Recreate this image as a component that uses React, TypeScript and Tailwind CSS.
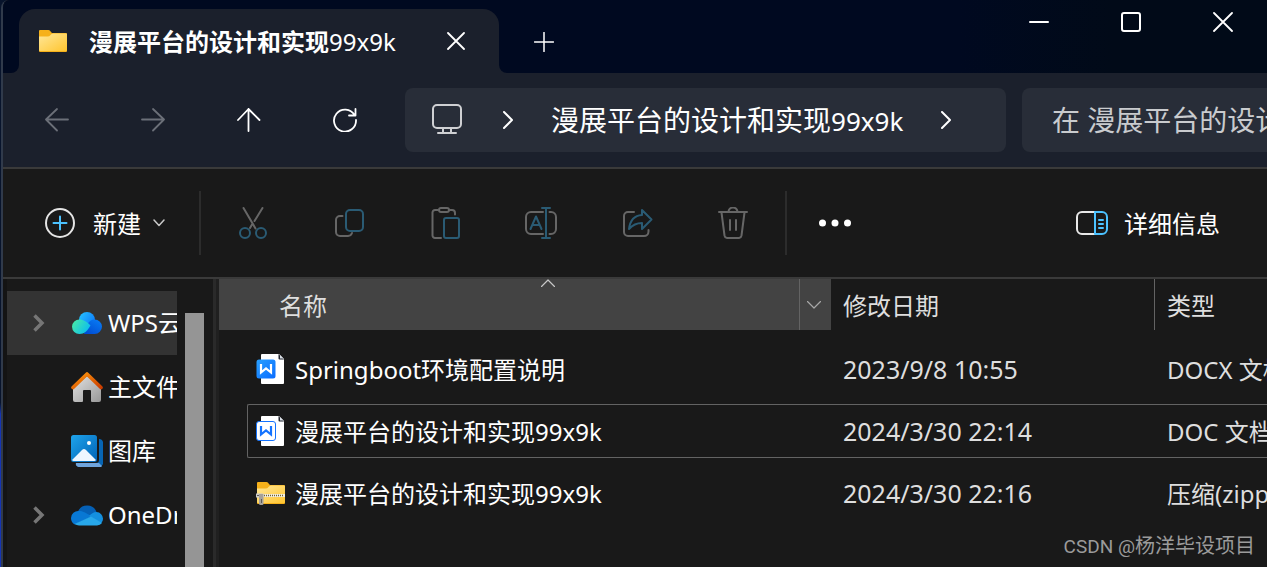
import type { ReactNode } from 'react'

type StrokeIconProps = {
  className?: string
  box: string
  width?: number
  children: ReactNode
}

function StrokeIcon({ className, box, width = 1.5, children }: StrokeIconProps) {
  return (
    <svg
      aria-hidden="true"
      className={className}
      viewBox={box}
      fill="none"
      stroke="currentColor"
      strokeWidth={width}
      strokeLinecap="round"
      strokeLinejoin="round"
    >
      {children}
    </svg>
  )
}

const TEAL = '#2a5b74'
const GREY = '#666666'

function FolderIcon({ zipped = false }: { zipped?: boolean }) {
  return (
    <svg aria-hidden="true" className="h-6 w-[30px] shrink-0" viewBox="0 0 30 24">
      <defs>
        <linearGradient id="folder-face" x1="0" y1="0" x2="1" y2="1">
          <stop offset="0" stopColor="#ffe799" />
          <stop offset="1" stopColor="#ffc52f" />
        </linearGradient>
      </defs>
      <path d="M1 2a1 1 0 0 1 1-1h8.500q1.500 0 2.500 2l1 1H28a1 1 0 0 1 1 1v17a1 1 0 0 1-1 1H2a1 1 0 0 1-1-1z" fill="#f6b11a" />
      <path d="M1 7.500h8.500q2 0 3-1.500t2.500-1.500h13a1 1 0 0 1 1 1V21a1 1 0 0 1-1 1H2a1 1 0 0 1-1-1z" fill="url(#folder-face)" />
      {zipped && (
        <>
          <path d="M6 14.500h23" stroke="#f3eee0" strokeWidth="3" />
          <path d="M8 14.500h20" stroke="#71622f" strokeWidth="1.500" strokeDasharray="1 1" />
          <path d="M0 12.500h7v4H0z" fill="#c9c9c9" />
          <path d="M3 13h4.500v9.500A1.500 1.500 0 0 1 6 24H4.500A1.500 1.500 0 0 1 3 22.500z" fill="#a6a19a" />
          <path d="M5.500 18v4M1 14.500h2" stroke="#5d5a55" strokeWidth="1" />
        </>
      )}
    </svg>
  )
}

function WriterIcon({ filled = false }: { filled?: boolean }) {
  return (
    <svg aria-hidden="true" className="h-8 w-[30px] shrink-0" viewBox="0 0 30 32">
      <defs>
        <linearGradient id="writer-badge" x1="0" y1="0" x2="1" y2="1">
          <stop offset="0" stopColor="#28a0ff" />
          <stop offset="1" stopColor="#0a6cff" />
        </linearGradient>
      </defs>
      <path d="M6 1h17l5 5v24a1 1 0 0 1-1 1H6a1 1 0 0 1-1-1V2a1 1 0 0 1 1-1z" fill="#ffffff" />
      <path d="M22.500 1v4.500a1 1 0 0 0 1 1H28z" fill="#20242f" />
      <path d="M24 2v3.500h3.500z" fill="#dce2ea" />
      <rect
        x="0.500"
        y="6.500"
        width="19"
        height="19"
        rx="2.500"
        fill={filled ? 'url(#writer-badge)' : '#ffffff'}
        stroke={filled ? 'none' : '#1473ff'}
      />
      <path
        d="M5 11v8.500l5-4 5 4V11"
        fill="none"
        stroke={filled ? '#ffffff' : '#1473ff'}
        strokeWidth="2.200"
      />
    </svg>
  )
}

function WpsCloudIcon() {
  return (
    <svg aria-hidden="true" className="h-8 w-8 shrink-0" viewBox="0 0 32 32">
      <defs>
        <linearGradient id="wps-top" x1="0" y1="0" x2="1" y2="0.600">
          <stop offset="0" stopColor="#28c5ff" />
          <stop offset="1" stopColor="#0d7dfb" />
        </linearGradient>
        <linearGradient id="wps-right" x1="0" y1="1" x2="0.700" y2="0">
          <stop offset="0" stopColor="#0048cf" />
          <stop offset="1" stopColor="#0878f2" />
        </linearGradient>
        <linearGradient id="wps-left" x1="0" y1="0.200" x2="1" y2="0.700">
          <stop offset="0" stopColor="#47eba6" />
          <stop offset="1" stopColor="#08baf4" />
        </linearGradient>
      </defs>
      <circle cx="16" cy="13" r="8" fill="url(#wps-top)" />
      <path d="M15 20c2-5 5-7.500 8.500-7.500A7.400 7.400 0 0 1 31 19.500a7.400 7.400 0 0 1-7.500 7.500H13z" fill="url(#wps-right)" />
      <path d="M8.500 12.500c3.500 0 8 2.500 11 6-3 5-6 8.500-11 8.500A7.400 7.400 0 0 1 1 19.700a7.400 7.400 0 0 1 7.500-7.200z" fill="url(#wps-left)" />
    </svg>
  )
}

function HomeIcon() {
  return (
    <svg aria-hidden="true" className="h-8 w-8 shrink-0" viewBox="0 0 32 32">
      <defs>
        <linearGradient id="home-wall" x1="0" y1="0" x2="1" y2="1">
          <stop offset="0" stopColor="#e3e3e3" />
          <stop offset="1" stopColor="#989898" />
        </linearGradient>
        <linearGradient id="home-roof" x1="0" y1="0" x2="1" y2="1">
          <stop offset="0" stopColor="#ff9a0d" />
          <stop offset="1" stopColor="#cc3d00" />
        </linearGradient>
      </defs>
      <path d="M16 5 2 17v12a2 2 0 0 0 2 2h7a1 1 0 0 0 1-1V20a1 1 0 0 1 1-1h6a1 1 0 0 1 1 1v10a1 1 0 0 0 1 1h7a2 2 0 0 0 2-2V17z" fill="url(#home-wall)" />
      <path d="m2 16.500 14-13.500 14 13.500" fill="none" stroke="url(#home-roof)" strokeWidth="3.600" strokeLinecap="round" strokeLinejoin="round" />
    </svg>
  )
}

function GalleryIcon() {
  return (
    <svg aria-hidden="true" className="h-8 w-8 shrink-0" viewBox="0 0 32 32">
      <defs>
        <linearGradient id="gallery-sky" x1="0" y1="0" x2="1" y2="1">
          <stop offset="0" stopColor="#1fa4ec" />
          <stop offset="1" stopColor="#0062b5" />
        </linearGradient>
      </defs>
      <path d="M28 4a4 4 0 0 1 4 3v22l-2 3H8a4 4 0 0 1-3-4h20a3 3 0 0 0 3-3z" fill="#0765b4" />
      <path d="M5 28h23l3 3-1 1H8a3 3 0 0 1-3-4z" fill="#6fa4dc" />
      <rect width="26" height="27" rx="2.500" fill="url(#gallery-sky)" />
      <path d="m1 25 10-10a3 3 0 0 1 4 0l10 10a2 2 0 0 1-2 1H3a2 2 0 0 1-2-1z" fill="#eef6ff" />
      <circle cx="18" cy="8" r="2" fill="#ffffff" />
    </svg>
  )
}

function OneDriveIcon() {
  return (
    <svg aria-hidden="true" className="h-8 w-8 shrink-0" viewBox="0 0 32 32">
      <path d="M7 12.500A10 10 0 0 1 25.500 13L20 19z" fill="#0560b5" />
      <path d="M8 12c4 0 6 1.500 13 5.500L4 25.500A7.200 7.200 0 0 1 0 19a7.200 7.200 0 0 1 8-7z" fill="#0878d4" />
      <path d="M25.500 13a6.800 6.800 0 0 1 6.500 7 6 6 0 0 1-2 4.500L18 17c2-2 4.500-4 7.500-4z" fill="#1490df" />
      <path d="M3.500 25 20 17.500l11 6.500a6.500 6.500 0 0 1-5 2.500H8A8 8 0 0 1 3.500 25z" fill="#28a8ea" />
    </svg>
  )
}

const commands: { label: string; icon: ReactNode }[] = [
  {
    label: '剪切',
    icon: (
      <>
        <path d="m6.500 1 12 20.500M25.500 1 17.500 14M15 17.500 13 21" stroke={GREY} />
        <circle cx="8" cy="26" r="5" stroke={TEAL} />
        <circle cx="24" cy="26" r="5" stroke={TEAL} />
      </>
    ),
  },
  {
    label: '复制',
    icon: (
      <>
        <path d="M9.500 9H7a4 4 0 0 0-4 4v12a4 4 0 0 0 4 4h8a4.500 4.500 0 0 0 4-3" stroke={GREY} />
        <rect x="13" y="3" width="17" height="21" rx="4" stroke={TEAL} />
      </>
    ),
  },
  {
    label: '粘贴',
    icon: (
      <>
        <path d="M9 3H6a2.500 2.500 0 0 0-2.500 2.500v23A2.500 2.500 0 0 0 6 31h6M20 3h3a3 3 0 0 1 3 3v1.500" stroke={GREY} />
        <rect x="10" y="1" width="10" height="4" rx="2" stroke={GREY} />
        <rect x="15" y="11" width="15" height="20" rx="2" stroke={TEAL} />
      </>
    ),
  },
  {
    label: '重命名',
    icon: (
      <>
        <path d="M18 5H6a5 5 0 0 0-5 5v12a5 5 0 0 0 5 5h12M24.500 5H26a5 5 0 0 1 5 5v12a5 5 0 0 1-5 5h-1.500" stroke={GREY} />
        <path d="M21 1v30M17 1h8M17 31h8M5.500 22 11 9.500 16.500 22M7.500 18h7" stroke={TEAL} strokeWidth="2" />
      </>
    ),
  },
  {
    label: '共享',
    icon: (
      <>
        <path d="M13 5H7a4 4 0 0 0-4 4v16a4 4 0 0 0 4 4h16a4.500 4.500 0 0 0 4.500-4.500V23" stroke={GREY} />
        <path d="m21 3 9.500 9.500L21 22v-6c-5.500 0-9 1.500-13 6 1-8 5-13.500 13-14z" stroke={TEAL} strokeWidth="2" />
      </>
    ),
  },
  {
    label: '删除',
    icon: (
      <path
        d="M2 5h28M11.500 5a4.500 4.500 0 0 1 9 0M4.500 5.500l3 23A3 3 0 0 0 10 31h12a3 3 0 0 0 2.500-2.500l3-23M13 13v10M19 13v10"
        stroke={GREY}
      />
    ),
  },
]

const places = [
  { name: 'WPS云盘', icon: <WpsCloudIcon />, expandable: true, selected: true },
  { name: '主文件夹', icon: <HomeIcon />, expandable: false, selected: false },
  { name: '图库', icon: <GalleryIcon />, expandable: false, selected: false },
  { name: 'OneDrive', icon: <OneDriveIcon />, expandable: true, selected: false },
]

const files = [
  { name: 'Springboot环境配置说明', date: '2023/9/8 10:55', type: 'DOCX 文档', icon: <WriterIcon filled />, focused: false },
  { name: '漫展平台的设计和实现99x9k', date: '2024/3/30 22:14', type: 'DOC 文档', icon: <WriterIcon />, focused: true },
  { name: '漫展平台的设计和实现99x9k', date: '2024/3/30 22:16', type: '压缩(zipped)文件夹', icon: <FolderIcon zipped />, focused: false },
]

function TitleBar() {
  return (
    <header className="flex h-[73px] bg-[#1b202c]">
      <div className="w-4 rounded-br-lg bg-[#000920]" />
      <div className="bg-[#000920] pt-[9px]">
        <div className="flex h-16 w-[480px] items-center rounded-t-2xl bg-[#1b202c] pl-[19px] pr-8">
          <FolderIcon />
          <h1 className="ml-[21px] flex-1 whitespace-nowrap pt-0.5 text-2xl font-bold">
            漫展平台的设计和实现<span className="font-normal">99x9k</span>
          </h1>
          <button type="button" aria-label="关闭标签页" className="flex h-6 w-[22px] items-center justify-center">
            <StrokeIcon box="0 0 18 18" width={1.8} className="h-[18px] w-[18px]">
              <path d="m1 1 16 16M17 1 1 17" />
            </StrokeIcon>
          </button>
        </div>
      </div>
      <div className="flex flex-1 justify-between rounded-bl-lg bg-linear-to-r from-[#000920] from-60% to-[#010a18] to-80%">
        <button type="button" aria-label="新建标签页" className="mt-2.5 flex h-16 w-[90px] items-center justify-center">
          <StrokeIcon box="0 0 20 20" className="h-5 w-5">
            <path d="M10 .500v19M.500 10h19" />
          </StrokeIcon>
        </button>
        <div className="-mr-0.5 flex h-11">
          <button type="button" aria-label="最小化" className="flex w-[92px] items-center justify-center">
            <StrokeIcon box="0 0 20 20" width={2} className="h-5 w-5">
              <path d="M1 10h18" />
            </StrokeIcon>
          </button>
          <button type="button" aria-label="最大化" className="flex w-[92px] items-center justify-center">
            <StrokeIcon box="0 0 20 20" width={2} className="h-5 w-5">
              <rect x="1" y="1" width="18" height="18" rx="2" />
            </StrokeIcon>
          </button>
          <button type="button" aria-label="关闭" className="flex w-[92px] items-center justify-center">
            <StrokeIcon box="0 0 20 20" width={1.8} className="h-5 w-5">
              <path d="m1 1 18 18M19 1 1 19" />
            </StrokeIcon>
          </button>
        </div>
      </div>
    </header>
  )
}

function NavigationBar() {
  return (
    <nav className="flex h-24 items-center overflow-hidden border-b-2 border-[#3a3a3a] bg-[#1b202c] pl-1.5">
      <button type="button" aria-label="后退" disabled className="flex h-16 w-24 shrink-0 items-center justify-center text-[#6b6f78]">
        <StrokeIcon box="0 0 24 24" width={1.8} className="h-6 w-6">
          <path d="M23 11.500H1M12 1 1 11.500l11 11" />
        </StrokeIcon>
      </button>
      <button type="button" aria-label="前进" disabled className="flex h-16 w-24 shrink-0 items-center justify-center text-[#6b6f78]">
        <StrokeIcon box="0 0 24 24" width={1.8} className="h-6 w-6">
          <path d="M1 11.500h22M12 1l11 10.500-11 11" />
        </StrokeIcon>
      </button>
      <button type="button" aria-label="向上" className="flex h-16 w-24 shrink-0 items-center justify-center">
        <StrokeIcon box="0 0 24 24" width={1.8} className="h-6 w-6">
          <path d="M11.500 23V1M1 12 11.500 1l11 11" />
        </StrokeIcon>
      </button>
      <button type="button" aria-label="刷新" className="flex h-16 w-24 shrink-0 items-center justify-center">
        <StrokeIcon box="0 0 24 24" width={1.8} className="h-6 w-6">
          <path d="M21.500 7A11 11 0 1 0 23 12M22.500 1v6.500H16" />
        </StrokeIcon>
      </button>
      <div className="ml-3 flex h-16 flex-1 items-center overflow-hidden rounded-lg bg-[#282d38] pl-[26px]">
        <StrokeIcon box="0 0 32 32" width={2} className="h-8 w-8 shrink-0 text-[#cfd0d3]">
          <rect x="2" y="1" width="28" height="23" rx="4" />
          <path d="M12 24.500v4M20 24.500v4M7 29h18" />
        </StrokeIcon>
        <StrokeIcon box="0 0 10 18" width={2} className="ml-10 h-[18px] w-2.5 shrink-0">
          <path d="m1 1 8 8-8 8" />
        </StrokeIcon>
        <a href="#folder" className="ml-[38px] whitespace-nowrap text-[28px] leading-9">
          漫展平台的设计和实现<span className="text-[26px]">99x9k</span>
        </a>
        <StrokeIcon box="0 0 10 18" width={2} className="ml-[38px] h-[18px] w-2.5 shrink-0">
          <path d="m1 1 8 8-8 8" />
        </StrokeIcon>
      </div>
      <div className="ml-4 w-[245px] shrink-0 overflow-hidden rounded-l-lg bg-[#282d38]">
        <input
          type="text"
          aria-label="搜索"
          placeholder="在 漫展平台的设计和实现99x9k 中搜索"
          className="h-16 w-[560px] bg-transparent pl-[30px] text-[28px] leading-9 outline-none placeholder:text-[#c9cbce] placeholder:opacity-100"
        />
      </div>
    </nav>
  )
}

function CommandBar() {
  return (
    <div role="toolbar" aria-label="命令" className="flex h-[110px] items-center border-b-2 border-[#3a3a3a] bg-[#191919]">
      <button type="button" className="ml-[42px] flex h-16 items-center text-2xl">
        <StrokeIcon box="0 0 30 30" width={2} className="h-[30px] w-[30px] text-[#e4e4e4]">
          <circle cx="15" cy="15" r="14" />
          <path d="M15 8.500v13M8.500 15h13" stroke="#4cc2ff" />
        </StrokeIcon>
        <span className="ml-[18px] pt-0.5">新建</span>
        <StrokeIcon box="0 0 12 8" className="ml-3 h-2 w-3 text-[#c8c8c8]">
          <path d="m1 1 5 5.500L11 1" />
        </StrokeIcon>
      </button>
      <div className="ml-[34px] h-16 w-0.5 bg-[#2c2c2c]" />
      <div className="ml-1 flex">
        {commands.map((command) => (
          <button
            key={command.label}
            type="button"
            disabled
            aria-label={command.label}
            className="flex h-16 w-24 items-center justify-center"
          >
            <StrokeIcon box="0 0 32 32" width={2} className="h-8 w-8">
              {command.icon}
            </StrokeIcon>
          </button>
        ))}
      </div>
      <div className="ml-1 h-16 w-0.5 bg-[#2c2c2c]" />
      <button type="button" aria-label="查看更多" className="flex h-16 w-24 items-center justify-center">
        <svg aria-hidden="true" className="h-2 w-8" viewBox="0 0 32 8" fill="#ffffff">
          <circle cx="3.500" cy="4" r="3.500" />
          <circle cx="16" cy="4" r="3.500" />
          <circle cx="28.500" cy="4" r="3.500" />
        </svg>
      </button>
      <button type="button" className="ml-auto mr-[47px] flex h-16 items-center gap-4 text-2xl">
        <StrokeIcon box="0 0 32 24" width={2} className="h-6 w-8 text-[#e8e8e8]">
          <path d="M19 1H6a5 5 0 0 0-5 5v12a5 5 0 0 0 5 5h13" />
          <path d="M19 1h7a5 5 0 0 1 5 5v12a5 5 0 0 1-5 5h-7zM23 9h4M23 13h4M23 17h4" stroke="#4cc2ff" />
        </StrokeIcon>
        <span className="pt-0.5">详细信息</span>
      </button>
    </div>
  )
}

function Sidebar() {
  return (
    <aside className="flex w-[213px] shrink-0 border-l-4 border-r-[3px] border-l-[#141414] border-r-[#2a2a2a] bg-[#191919]">
      <ul className="w-[170px] overflow-hidden pt-3">
        {places.map((place) => (
          <li key={place.name}>
            <a
              href="#place"
              className={
                place.selected
                  ? 'flex h-16 items-center whitespace-nowrap bg-[#333333] pl-[26px] text-2xl'
                  : 'flex h-16 items-center whitespace-nowrap pl-[26px] text-2xl'
              }
            >
              <span className="mr-[26px] w-3 shrink-0">
                {place.expandable && (
                  <svg aria-hidden="true" className="h-[18px] w-3" viewBox="0 0 12 18" fill="none" stroke="#767676" strokeWidth="3.500">
                    <path d="m1.500 1.500 7.500 7.500-7.500 7.500" />
                  </svg>
                )}
              </span>
              {place.icon}
              <span className="ml-[5px]">{place.name}</span>
            </a>
          </li>
        ))}
      </ul>
      <div className="ml-2 mt-[34px] w-[19px] bg-[#959595]" />
    </aside>
  )
}

function FileList() {
  return (
    <main className="min-w-0 flex-1 overflow-hidden border-l-[3px] border-[#202020] bg-[#191919]">
      <table className="w-full table-fixed border-separate border-spacing-0 whitespace-nowrap text-left text-2xl">
        <colgroup>
          <col className="w-[612px]" />
          <col className="w-[324px]" />
          <col />
        </colgroup>
        <thead className="text-[#dedede]">
          <tr>
            <th scope="col" className="relative h-[51px] bg-[#434343] p-0 font-normal">
              <StrokeIcon box="0 0 14 8" width={1.2} className="absolute left-[322px] top-0 h-2 w-3.5 text-[#c8c8c8]">
                <path d="m.500 7.500 6.500-6.500 6.500 6.500" />
              </StrokeIcon>
              <div className="flex h-[51px] items-center">
                <span className="flex-1 pl-[60px] pt-0.5">名称</span>
                <button type="button" aria-label="筛选名称" className="flex h-[51px] w-8 items-center justify-center border-l border-[#636363] pr-1">
                  <StrokeIcon box="0 0 14 8" width={1.2} className="h-2 w-3.5 text-[#a8a8a8]">
                    <path d="m.500.500 6.500 6.500 6.500-6.500" />
                  </StrokeIcon>
                </button>
              </div>
            </th>
            <th scope="col" className="border-r border-[#636363] px-3 pb-0 pt-0.5 font-normal">修改日期</th>
            <th scope="col" className="px-3 pb-0 pt-0.5 font-normal">类型</th>
          </tr>
        </thead>
        <tbody>
          <tr aria-hidden="true">
            <td colSpan={3} className="h-2 p-0" />
          </tr>
          {files.map((file) => {
            const line = file.focused ? 'border-[#636363]' : 'border-transparent'
            return (
              <tr key={file.date}>
                <td className="py-1 pl-7 pr-0">
                  <div className={`flex h-[54px] items-center gap-2 rounded-l-xs border-y border-l pl-2 ${line}`}>
                    {file.icon}
                    <span className="pl-px pt-0.5">{file.name}</span>
                  </div>
                </td>
                <td className="px-0 py-1">
                  <div className={`flex h-[54px] items-center border-y px-3 pt-0.5 text-[25px] text-[#dedede] ${line}`}>{file.date}</div>
                </td>
                <td className="px-0 py-1">
                  <div className={`flex h-[54px] items-center overflow-hidden border-y pl-3 pt-0.5 text-[#dedede] ${line}`}>{file.type}</div>
                </td>
              </tr>
            )
          })}
        </tbody>
      </table>
    </main>
  )
}

export default function App() {
  return (
    <div className="relative flex min-h-screen overflow-hidden bg-linear-to-b from-[#08142c] from-71% to-[#1534b4] to-73% font-['Noto_Sans','Noto_Sans_CJK_SC',sans-serif] text-white">
      <div className="ml-px flex min-w-0 flex-1 flex-col overflow-hidden rounded-tl-lg border-l-2 border-[#303a4b] bg-[#191919]">
        <TitleBar />
        <NavigationBar />
        <CommandBar />
        <div className="flex flex-1">
          <Sidebar />
          <FileList />
        </div>
      </div>
      <p className="absolute bottom-1.5 right-3 font-['Roboto','Noto_Sans_CJK_SC',sans-serif] text-xl leading-7 text-[#9b9b9b]">
        <span className="text-[19px]">CSDN @</span>杨洋毕设项目
      </p>
    </div>
  )
}
